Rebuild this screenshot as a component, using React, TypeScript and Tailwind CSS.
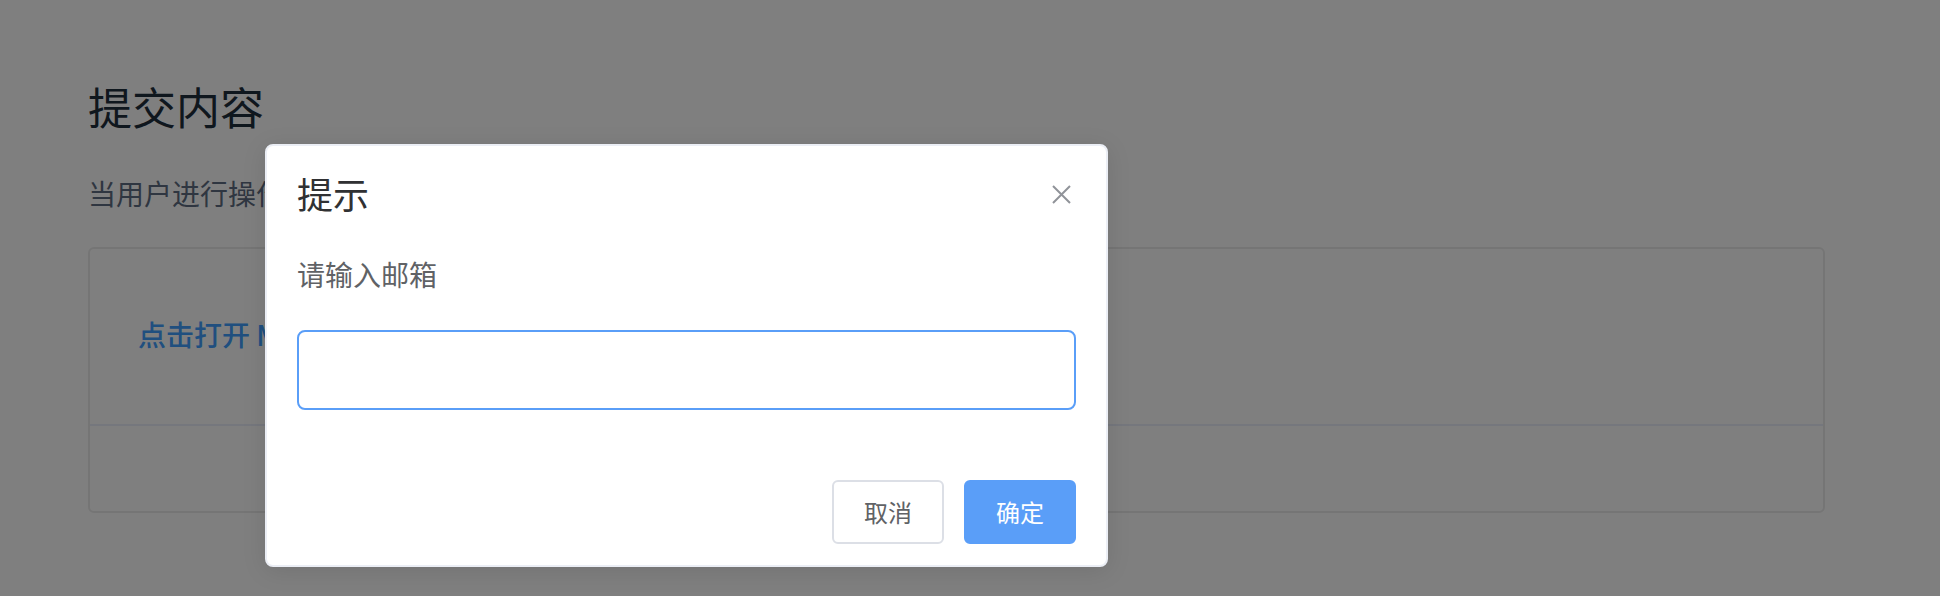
export default function App() {
  return (
    <div className="relative h-[596px] overflow-hidden bg-white font-['Noto_Sans_CJK_SC','Noto_Sans',sans-serif]">
      {/* docs page */}
      <div className="pt-[84px] pr-[115px] pl-[88px]">
        <h3 className="text-[44px] leading-[44px] font-normal text-[#1f2f3d]">提交内容</h3>
        <p className="mt-[44px] text-[28px] leading-[42px] text-[#5e6d82]">
          当用户进行操作时会被触发，中断用户操作，提示用户进行输入的对话框。
        </p>
        <div className="mt-[33px] rounded-[6px] border-2 border-[#ebebeb]">
          <div className="flex h-[175px] items-center px-[48px] pb-[6px]">
            <button className="text-[28px] leading-[28px] font-medium text-[#409eff]">点击打开 Message Box</button>
          </div>
          <div className="h-[87px] border-t-2 border-[#eaeefb]" />
        </div>
      </div>

      {/* modal mask + message box */}
      <div className="absolute inset-0 bg-black/50 pt-[144px] pl-[265px]">
        <div className="relative w-[843px] rounded-[8px] border-2 border-[#ebeef5] bg-white pb-[21px] shadow-[0_4px_24px_rgba(0,0,0,0.1)]">
          <div className="px-[30px] pt-[29px] pb-[20px]">
            <div className="text-[36px] leading-[36px] text-[#303133]">提示</div>
          </div>
          <button className="absolute top-[32px] right-[29px] flex h-[32px] w-[32px] items-center justify-center">
            <svg width="19" height="19" viewBox="0 0 19 19" fill="none" stroke="#909399" strokeWidth="2">
              <path d="M1 1L18 18M18 1L1 18" />
            </svg>
          </button>
          <div className="px-[30px] pt-[19px] pb-[20px]">
            <p className="text-[28px] leading-[48px] text-[#606266]">请输入邮箱</p>
            <div className="pt-[32px]">
              <input className="block h-[80px] w-full rounded-[8px] border-2 border-[#5a9ef8] px-[30px] text-[28px] outline-none" />
              <div className="h-[40px]" />
            </div>
          </div>
          <div className="flex justify-end gap-[20px] px-[30px] pt-[10px]">
            <button className="h-[64px] rounded-[6px] border-2 border-[#dcdfe6] bg-white px-[30px] text-[24px] leading-[24px] text-[#606266]">取消</button>
            <button className="h-[64px] rounded-[6px] border-2 border-[#5a9ef8] bg-[#5a9ef8] px-[30px] text-[24px] leading-[24px] text-white">确定</button>
          </div>
        </div>
      </div>
    </div>
  );
}
